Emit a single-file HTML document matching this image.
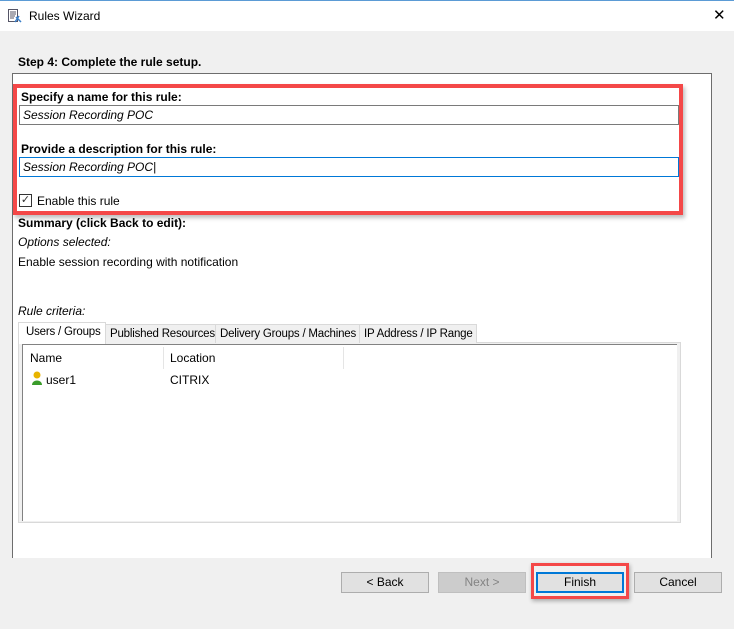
<!DOCTYPE html>
<html><head><style>
*{box-sizing:border-box;margin:0;padding:0}
body{width:734px;height:629px;background:#f0f0f0;font-family:"Liberation Sans",Arial,sans-serif;font-size:12px;color:#000;position:relative;overflow:hidden}
.a{position:absolute;white-space:nowrap}
.b{font-weight:bold;font-size:12px}
.btn{position:absolute;top:572px;width:88px;height:21px;border:1px solid #adadad;background:#e1e1e1;text-align:center;line-height:19px;font-size:12px}
.tab{position:absolute;top:324px;height:19px;border:1px solid #d9d9d9;border-bottom:none;background:#f0f0f0;line-height:18px;padding-left:4px;font-size:11.5px;white-space:nowrap;overflow:hidden;letter-spacing:-0.2px}
</style></head><body>
<div class="a" style="left:0;top:0;width:734px;height:31px;background:#fff;border-top:1px solid #5b9bd5"></div>
<svg class="a" style="left:7px;top:8px" width="16" height="16" viewBox="0 0 16 16"><rect x="1.5" y="1.5" width="9" height="12" fill="#fff" stroke="#556"/><path d="M3 4h6M3 6h6M3 8h5M3 10h4" stroke="#556"/><path d="M9 9l5 5M12 8l-4 6" stroke="#3a7fc9" stroke-width="1.5"/></svg>
<div class="a" style="left:29px;top:9px;font-size:12px">Rules Wizard</div>
<div class="a" style="left:713px;top:6px;font-size:15px">✕</div>
<div class="a b" style="left:18px;top:55px">Step 4: Complete the rule setup.</div>
<div class="a" style="left:12px;top:73px;width:700px;height:485px;background:#fff;border:1px solid #6d6d6d;border-bottom:none"></div>
<div class="a" style="left:13px;top:84px;width:670px;height:131px;border:4px solid #f44848;box-shadow:2px 3px 4px rgba(0,0,0,.25)"></div>
<div class="a b" style="left:21px;top:90px">Specify a name for this rule:</div>
<div class="a" style="left:19px;top:105px;width:660px;height:20px;border:1px solid #7a7a7a;font-style:italic;padding:2px 3px;line-height:14px">Session Recording POC</div>
<div class="a b" style="left:21px;top:142px">Provide a description for this rule:</div>
<div class="a" style="left:19px;top:157px;width:660px;height:20px;border:1px solid #0078d7;font-style:italic;padding:2px 3px;line-height:14px">Session Recording POC|</div>
<div class="a" style="left:19px;top:194px;width:13px;height:13px;border:1px solid #333;font-size:11px;line-height:11px;text-align:center;color:#333">✓</div>
<div class="a" style="left:37px;top:194px">Enable this rule</div>
<div class="a b" style="left:18px;top:216px">Summary (click Back to edit):</div>
<div class="a" style="left:18px;top:235px;font-style:italic">Options selected:</div>
<div class="a" style="left:18px;top:255px">Enable session recording with notification</div>
<div class="a" style="left:18px;top:304px;font-style:italic">Rule criteria:</div>
<div class="a" style="left:18px;top:342px;width:663px;height:181px;background:#f0f0f0;border:1px solid #d9d9d9"></div>
<div class="tab" style="left:105px;width:111px">Published Resources</div>
<div class="tab" style="left:215px;width:145px">Delivery Groups / Machines</div>
<div class="tab" style="left:359px;width:118px">IP Address / IP Range</div>
<div class="tab" style="left:18px;top:322px;width:88px;height:22px;background:#fff;padding-left:7px;z-index:2">Users / Groups</div>
<div class="a" style="left:22px;top:344px;width:655px;height:177px;background:#fff;border-top:1px solid #828282;border-left:1px solid #828282"></div>
<div class="a" style="left:30px;top:351px">Name</div>
<div class="a" style="left:163px;top:347px;width:1px;height:22px;background:#e5e5e5"></div>
<div class="a" style="left:170px;top:351px">Location</div>
<div class="a" style="left:343px;top:347px;width:1px;height:22px;background:#e5e5e5"></div>
<svg class="a" style="left:31px;top:371px" width="12" height="15" viewBox="0 0 12 15"><circle cx="6" cy="4" r="3.5" fill="#e8b400"/><path d="M1 14c0-6 10-6 10 0z" fill="#3a9c2a"/></svg>
<div class="a" style="left:46px;top:373px">user1</div>
<div class="a" style="left:170px;top:373px">CITRIX</div>
<div class="btn" style="left:341px">&lt; Back</div>
<div class="btn" style="left:438px;background:#cccccc;border-color:#bfbfbf;color:#838383">Next &gt;</div>
<div class="a" style="left:531px;top:563px;width:98px;height:36px;border:3px solid #f44848;box-shadow:1px 2px 4px rgba(0,0,0,.3)"></div>
<div class="btn" style="left:536px;border:2px solid #0078d7;line-height:17px">Finish</div>
<div class="btn" style="left:634px">Cancel</div>
</body></html>
